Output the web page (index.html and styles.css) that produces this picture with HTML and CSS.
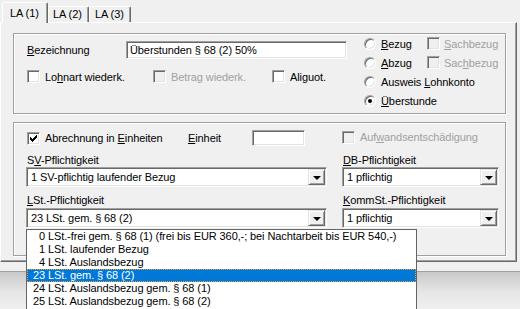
FILE: index.html
```html
<!DOCTYPE html>
<html lang="de">
<head>
    <meta charset="UTF-8">
    <title>Lohnart - LA</title>
    <link rel="stylesheet" href="styles.css">
</head>
<body>
    <div class="tabs">
        <div class="tab tab-active">LA (1)</div>
        <div class="tab tab-2">LA (2)</div>
        <div class="tab tab-3">LA (3)</div>
    </div>
    <div class="panel">
        <div class="groupbox gb-top">
            <div class="gb-left">
                <div class="field-row">
                    <span class="field-label"><u>B</u>ezeichnung</span>
                    <span class="textbox tb-name">Überstunden § 68 (2) 50%</span>
                </div>
                <div class="check-row">
                    <span class="check-item ci-1"><span class="check"></span><span>Lo<u>h</u>nart wiederk.</span></span>
                    <span class="check-item ci-2 disabled"><span class="check"></span><span>Betra<u>g</u> wiederk.</span></span>
                    <span class="check-item"><span class="check"></span><span>Aliguot.</span></span>
                </div>
            </div>
            <div class="gb-right">
                <span class="radio-item"><span class="radio"></span><span><u>B</u>ezug</span></span>
                <span class="check-item disabled"><span class="check"></span><span><u>S</u>achbezug</span></span>
                <span class="radio-item"><span class="radio"></span><span><u>A</u>bzug</span></span>
                <span class="check-item disabled"><span class="check"></span><span>Sac<u>h</u>bezug</span></span>
                <span class="radio-item wide"><span class="radio"></span><span>Ausweis <u>L</u>ohnkonto</span></span>
                <span class="radio-item wide"><span class="radio on"></span><span><u>Ü</u>berstunde</span></span>
            </div>
        </div>

        <div class="groupbox gb-bottom">
            <div class="unit-row">
                <span class="check-item ci-units">
                    <span class="check checked">
                        <svg width="7" height="7" viewBox="0 0 7 7" shape-rendering="crispEdges"><path d="M6 0h1v1h-1z M5 1h2v1h-2z M0 2h1v1h-1z M4 2h3v1h-3z M0 3h2v1h-2z M3 3h3v1h-3z M0 4h5v1h-5z M1 5h3v1h-3z M2 6h1v1h-1z" fill="#000"/></svg>
                    </span>
                    <span>Abrechnung in <u>E</u>inheiten</span>
                </span>
                <span class="unit-label"><u>E</u>inheit</span>
                <span class="textbox tb-unit"></span>
                <span class="check-item disabled ci-aufw"><span class="check"></span><span>Auf<u>w</u>andsentschädigung</span></span>
            </div>
            <div class="combo-grid">
                <span class="combo-label gap-1">S<u>V</u>-Pflichtigkeit</span>
                <span class="combo-label gap-1"><u>D</u>B-Pflichtigkeit</span>
                <div class="combo">
                    <span class="combo-text">1 SV-pflichtig laufender Bezug</span>
                    <span class="combo-btn"><span class="arrow"></span></span>
                </div>
                <div class="combo">
                    <span class="combo-text">1 pflichtig</span>
                    <span class="combo-btn"><span class="arrow"></span></span>
                </div>
                <span class="combo-label gap-2"><u>L</u>St.-Pflichtigkeit</span>
                <span class="combo-label gap-2"><u>K</u>ommSt.-Pflichtigkeit</span>
                <div class="combo gap-3">
                    <span class="combo-text">23 LSt. gem. § 68 (2)</span>
                    <span class="combo-btn"><span class="arrow"></span></span>
                </div>
                <div class="combo gap-3">
                    <span class="combo-text">1 pflichtig</span>
                    <span class="combo-btn"><span class="arrow"></span></span>
                </div>
            </div>
        </div>
    </div>
    <div class="below">
        <div class="below-inner"></div>
    </div>

    <!-- open list of the LSt combo, drawn over the dialog -->
    <ul class="droplist">
        <li><span class="num">0</span> LSt.-frei gem. § 68 (1) (frei bis EUR 360,-; bei Nachtarbeit bis EUR 540,-)</li>
        <li><span class="num">1</span> LSt. laufender Bezug</li>
        <li><span class="num">4</span> LSt. Auslandsbezug</li>
        <li class="selected"><span class="num">23</span> LSt. gem. § 68 (2)</li>
        <li><span class="num">24</span> LSt. Auslandsbezug gem. § 68 (1)</li>
        <li><span class="num">25</span> LSt. Auslandsbezug gem. § 68 (2)</li>
    </ul>
</body>
</html>
```

FILE: styles.css
```css
html {
    overflow: hidden;
}
body {
    margin: 0;
    width: 520px;
    height: 309px;
    overflow: hidden;
    position: relative;
    background-color: #f0f0f0;
    font-family: 'Liberation Sans', Arial, sans-serif;
    font-size: 11px;
    color: #000;
    letter-spacing: -0.1px;
}
u {
    text-decoration: underline;
    text-underline-offset: 1px;
}

/* tabs */
.tabs {
    display: flex;
    align-items: flex-end;
    height: 22px;
    padding-left: 2px;
}
.tab {
    box-sizing: border-box;
    height: 16px;
    line-height: 14px;
    border-top: 1px solid #fff;
    border-left: 1px solid #fff;
    border-right: 1px solid #696969;
    box-shadow: inset -1px 0 0 #a0a0a0;
    border-radius: 2px 2px 0 0;
}
.tab-active {
    position: relative;
    z-index: 1;
    width: 46px;
    height: 21px;
    margin-bottom: -1px;
    padding: 3px 0 0 7px;
    line-height: 14px;
    background-color: #f0f0f0;
}
.tab-2 {
    width: 41px;
    padding-left: 4px;
}
.tab-3 {
    width: 42px;
    padding-left: 5px;
}

/* tab page */
.panel {
    box-sizing: border-box;
    width: 517px;
    height: 240px;
    padding: 10px 0 0 12px;
    border-top: 1px solid #fff;
    border-left: 1px solid #fff;
    border-right: 1px solid #696969;
    border-bottom: 1px solid #696969;
    box-shadow: inset -1px -1px 0 #a0a0a0;
}
.groupbox {
    box-sizing: border-box;
    width: 493px;
    border: 1px solid #a0a0a0;
    box-shadow: inset 1px 1px 0 #fff, 1px 1px 0 #fff;
}
.gb-top {
    height: 81px;
    display: flex;
    padding-left: 13px;
}
.gb-bottom {
    height: 134px;
    margin-top: 8px;
    padding: 7px 0 0 12px;
}

.gb-left {
    width: 320px;
    padding-top: 7px;
}
.field-row {
    display: flex;
    align-items: center;
    height: 18px;
}
.field-label {
    width: 99px;
}
.textbox {
    box-sizing: border-box;
    display: block;
    height: 18px;
    padding: 2px 0 0 3px;
    background-color: #fff;
    border: 1px solid;
    border-color: #a0a0a0 #fff #fff #a0a0a0;
    box-shadow: inset 1px 1px 0 #696969, inset -1px -1px 0 #e3e3e3;
    white-space: nowrap;
}
.tb-name {
    width: 221px;
}
.check-row {
    display: flex;
    margin-top: 11px;
    height: 13px;
}
.check-item,
.radio-item {
    display: flex;
    align-items: center;
    white-space: nowrap;
}
.ci-1 {
    width: 126px;
}
.ci-2 {
    width: 119px;
}
.disabled {
    color: #a0a0a0;
}
.check {
    box-sizing: border-box;
    width: 13px;
    height: 13px;
    margin-right: 5px;
    flex: none;
    background-color: #fff;
    border: 1px solid;
    border-color: #a0a0a0 #fff #fff #a0a0a0;
    box-shadow: inset 1px 1px 0 #696969, inset -1px -1px 0 #e3e3e3;
}
.disabled .check {
    background-color: #f0f0f0;
}
.check svg {
    display: block;
    margin: 2px 0 0 2px;
}

.gb-right {
    margin-left: 17px;
    display: grid;
    grid-template-columns: 63px auto;
    grid-auto-rows: 19px;
}
.radio-item.wide {
    grid-column: 1 / 3;
}
.radio {
    position: relative;
    box-sizing: border-box;
    width: 12px;
    height: 12px;
    margin-right: 5px;
    flex: none;
    border-radius: 50%;
    background-color: #fff;
    border: 1px solid;
    border-color: #a0a0a0 #fff #fff #a0a0a0;
    box-shadow: inset 1px 1px 0 #696969, inset -1px -1px 0 #e3e3e3;
}
.radio.on::after {
    content: "";
    position: absolute;
    left: 3px;
    top: 3px;
    width: 4px;
    height: 4px;
    border-radius: 50%;
    background-color: #000;
}
.gb-right .check-item .check {
    margin-right: 4px;
}

/* second group */
.unit-row {
    display: flex;
    align-items: center;
    height: 16px;
    padding-left: 1px;
}
.ci-units {
    width: 161px;
}
.unit-label {
    width: 64px;
}
.tb-unit {
    width: 53px;
    height: 16px;
}
.ci-aufw {
    margin-left: 37px;
    margin-top: -2px;
}

.combo-grid {
    display: grid;
    grid-template-columns: 301px 157px;
    column-gap: 15px;
}
.combo-label {
    height: 13px;
    line-height: 13px;
    padding-left: 1px;
}
.gap-1 {
    margin-top: 8px;
}
.gap-2 {
    margin-top: 7px;
}
.gap-3 {
    margin-top: 1px;
}
.combo {
    box-sizing: border-box;
    height: 20px;
    display: flex;
    align-items: center;
    justify-content: space-between;
    padding: 1px;
    background-color: #fff;
    border: 1px solid;
    border-color: #a0a0a0 #fff #fff #a0a0a0;
    box-shadow: inset 1px 1px 0 #696969, inset -1px -1px 0 #e3e3e3;
}
.combo-text {
    padding-left: 3px;
    white-space: nowrap;
}
.combo-btn {
    box-sizing: border-box;
    width: 17px;
    height: 16px;
    display: flex;
    align-items: center;
    justify-content: center;
    background-color: #f0f0f0;
    border: 1px solid;
    border-color: #e3e3e3 #696969 #696969 #e3e3e3;
    box-shadow: inset 1px 1px 0 #fff, inset -1px -1px 0 #a0a0a0;
}
.arrow {
    width: 0;
    height: 0;
    border-left: 4px solid transparent;
    border-right: 4px solid transparent;
    border-top: 4px solid #000;
    margin-top: 1px;
}

/* area under the dialog */
.below {
    height: 47px;
    padding-top: 9px;
    box-sizing: border-box;
}
.below-inner {
    height: 38px;
    border-top: 1px solid #a0a0a0;
    background: linear-gradient(#c9c9c9, #e6e6e6 20px, #f0f0f0);
}

/* open dropdown list */
.droplist {
    position: absolute;
    left: 26px;
    top: 229px;
    width: 391px;
    height: 80px;
    box-sizing: border-box;
    margin: 0;
    padding: 0;
    list-style: none;
    background-color: #fff;
    border: 1px solid #646464;
    border-bottom: none;
}
.droplist li {
    height: 13px;
    line-height: 13px;
    padding-left: 5px;
    white-space: nowrap;
}
.droplist .num {
    display: inline-block;
    width: 13px;
    text-align: right;
}
.droplist li.selected {
    background-color: #0078d7;
    color: #fff;
    outline: 1px dotted #f0a030;
    outline-offset: -1px;
}
```
